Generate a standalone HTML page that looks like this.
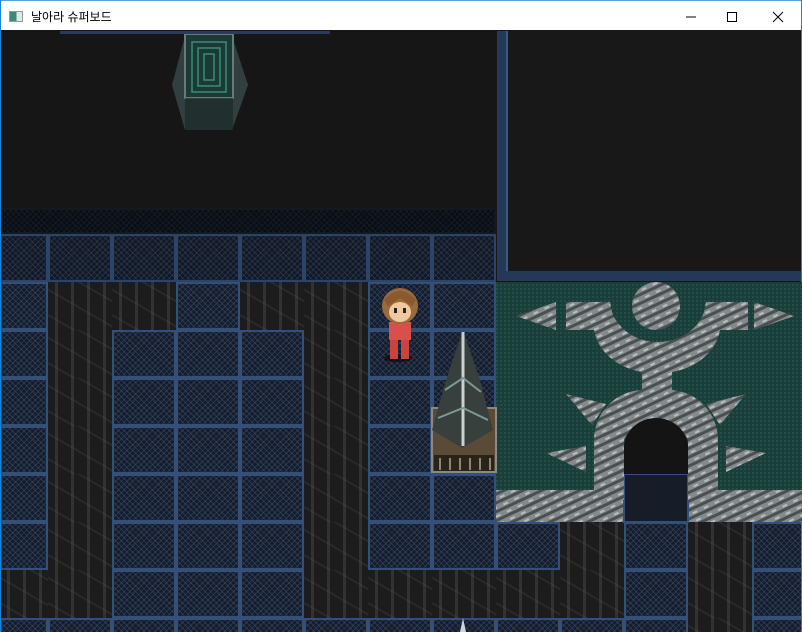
<!DOCTYPE html>
<html><head><meta charset="utf-8">
<style>
html,body{margin:0;padding:0;width:802px;height:632px;overflow:hidden;background:#161616;font-family:"Liberation Sans","Noto Sans CJK KR",sans-serif}
#title{position:absolute;left:0;top:0;width:802px;height:30px;background:#fff;border-top:1px solid #5aa0e0;box-sizing:border-box}
#title .t{position:absolute;left:31px;top:7px;font-size:12px;color:#000}
#title .ic{position:absolute;left:9px;top:10px;width:14px;height:11px;border:1px solid #999;background:linear-gradient(90deg,#3c8a7a 0 55%,#dfe8e8 55%);box-sizing:border-box}
#game{position:absolute;left:0;top:30px;width:802px;height:602px;background:#161616;overflow:hidden}
.c{position:absolute;box-sizing:border-box}
.m{border:2px solid #34507a;background-color:#161c28;background-image:repeating-linear-gradient(45deg,rgba(70,100,150,.35) 0 1px,transparent 1px 4px),repeating-linear-gradient(-45deg,rgba(70,100,150,.35) 0 1px,transparent 1px 4px)}
.d{background-color:#1c1c1c;background-image:repeating-linear-gradient(90deg,transparent 0 7px,rgba(90,90,90,.35) 7px 10px,transparent 10px 16px),repeating-linear-gradient(30deg,transparent 0 12px,rgba(70,70,70,.3) 12px 14px,transparent 14px 22px)}
.lb{position:absolute;left:0;width:1px;top:0;height:632px;background:#1883d7}
.rb{position:absolute;right:0;width:1px;top:0;height:632px;background:#1883d7}
</style></head><body>
<div id="game"></div>
<div id="title"><div class="ic"></div><div class="t">날아라 슈퍼보드</div>
<svg style="position:absolute;left:680px;top:8px" width="110" height="16">
<line x1="6" y1="8" x2="16" y2="8" stroke="#000" stroke-width="1"/>
<rect x="47.5" y="3.5" width="9" height="9" fill="none" stroke="#000"/>
<line x1="93" y1="3" x2="103" y2="13" stroke="#000"/><line x1="103" y1="3" x2="93" y2="13" stroke="#000"/>
</svg></div>
<div class="lb"></div><div class="rb"></div>
<script>
var g=document.getElementById('game');
var cols=[0,48,112,176,240,304,368,432,496,560,624,688,752,802];
var rows=[234,282,330,378,426,474,522,570,618,632];
var map=[
"mmmmmmmmxxxxx",
"mddmddmmxxxxx",
"mdmmmdmmxxxxx",
"mdmmmdmmxxxxx",
"mdmmmdmmxxxxx",
"mdmmmdmmxxmxx",
"mdmmmdmmmdmdm",
"ddmmmdddddmdm",
"mmmmmmmmmmmdm"];
function add(cls,x,y,w,h,st){var e=document.createElement('div');e.className='c '+cls;e.style.cssText='left:'+x+'px;top:'+(y-30)+'px;width:'+w+'px;height:'+h+'px;'+(st||'');g.appendChild(e);return e;}
for(var r=0;r<map.length;r++)for(var c=0;c<13;c++){var t=map[r][c];if(t=='x')continue;
 var h=rows[r+1]-rows[r]; if(r==8)h=48;
 add(t,cols[c],rows[r],cols[c+1]-cols[c]+(c==12?14:0),h,r==0?'filter:brightness(.85)':'');}
add('m',0,208,496,26,'filter:brightness(.45);border-color:#2a3a40');
add('',497,31,305,250,'background:#181818;border-left:9px solid #243858;border-bottom:10px solid #243858;box-shadow:inset 2px 0 0 #3a5888');
</script>
<svg style="position:absolute;left:0;top:30px" width="802" height="602" viewBox="0 30 802 602">
<defs>
<pattern id="st" width="12" height="8" patternUnits="userSpaceOnUse" patternTransform="rotate(-25)">
<rect width="12" height="8" fill="#858b8d"/><rect y="0" width="12" height="3" fill="#4a4f51"/><rect x="3" y="5" width="5" height="2" fill="#b8bebf"/></pattern>
<pattern id="gr" width="4" height="4" patternUnits="userSpaceOnUse"><rect width="4" height="4" fill="#1a3e39"/><rect width="2" height="2" fill="#234d47"/></pattern>
</defs>
<rect x="496" y="282" width="306" height="240" fill="url(#gr)"/>
<rect x="496" y="490" width="306" height="32" fill="url(#st)"/>
<rect x="624" y="474" width="64" height="48" fill="#161c28" stroke="#34507a" stroke-width="2"/>
<path d="M566 302 H610 L612 312 A48 42 0 0 0 704 312 L706 302 H748 V330 H720 A60 50 0 0 1 672 372 V390 A50 50 0 0 1 718 440 V500 H688 V440 A34 30 0 0 0 624 440 V500 H594 V440 A50 50 0 0 1 642 390 V372 A60 50 0 0 1 594 330 H566 Z" fill="url(#st)"/>
<path d="M624 474 V448 A32 30 0 0 1 688 448 V474 Z" fill="#141414"/>
<circle cx="656" cy="306" r="24" fill="url(#st)"/>
<polygon points="516,316 556,302 556,330" fill="url(#st)"/>
<polygon points="794,316 754,302 754,330" fill="url(#st)"/>
<polygon points="566,394 606,404 592,425" fill="url(#st)"/>
<polygon points="746,394 706,404 720,425" fill="url(#st)"/>
<polygon points="546,453 586,446 586,472" fill="url(#st)"/>
<polygon points="766,453 726,446 726,472" fill="url(#st)"/>
<polygon points="185,36 172,85 185,130 232,130 248,85 232,36" fill="#3a4a4c" opacity=".8"/>
<rect x="185" y="34" width="48" height="64" fill="#1a3a36" stroke="#6a7a7a" stroke-width="2"/>
<path d="M192 42 H226 V92 H192 Z M198 48 H220 V86 H198 Z M204 54 H214 V80 H204 Z" fill="none" stroke="#3f8a7a" stroke-width="1.5"/>
<rect x="185" y="98" width="48" height="32" fill="#1a2a28" opacity=".7"/>
<rect x="60" y="31" width="270" height="3" fill="#2a3a5a"/>
<rect x="432" y="408" width="64" height="64" fill="#5a4a36" stroke="#8a8a80" stroke-width="2"/>
<rect x="434" y="455" width="60" height="16" fill="#2a2418"/>
<g stroke="#b0a890" stroke-width="1.5"><line x1="440" y1="458" x2="440" y2="470"/><line x1="450" y1="458" x2="450" y2="470"/><line x1="460" y1="458" x2="460" y2="470"/><line x1="470" y1="458" x2="470" y2="470"/><line x1="480" y1="458" x2="480" y2="470"/><line x1="490" y1="458" x2="490" y2="470"/></g>
<polygon points="463,330 446,380 432,430 462,448 493,430 480,380" fill="#38403e"/>
<polyline points="463,332 463,446" stroke="#c8d0d0" stroke-width="3" fill="none"/>
<path d="M445 390 L463 378 L481 392 M438 418 L463 408 L488 420" stroke="#7a9a96" stroke-width="2" fill="none"/>
<ellipse cx="398" cy="358" rx="14" ry="4" fill="#000" opacity=".5"/>
<rect x="389" y="322" width="22" height="18" fill="#d8504a"/>
<rect x="390" y="340" width="8" height="19" fill="#c8443e"/><rect x="401" y="340" width="8" height="19" fill="#c8443e"/>
<ellipse cx="400" cy="306" rx="18" ry="18" fill="#9a6a3a"/>
<ellipse cx="400" cy="312" rx="11" ry="10" fill="#f0c8a0"/>
<rect x="394" y="308" width="3" height="5" fill="#222"/><rect x="403" y="308" width="3" height="5" fill="#222"/>
<path d="M384 300 Q400 282 416 300 L412 306 L400 298 L388 306 Z" fill="#8a5a2e"/>
<polygon points="463,618 460,632 466,632" fill="#cfd5d5"/>
</svg>
</body></html>
